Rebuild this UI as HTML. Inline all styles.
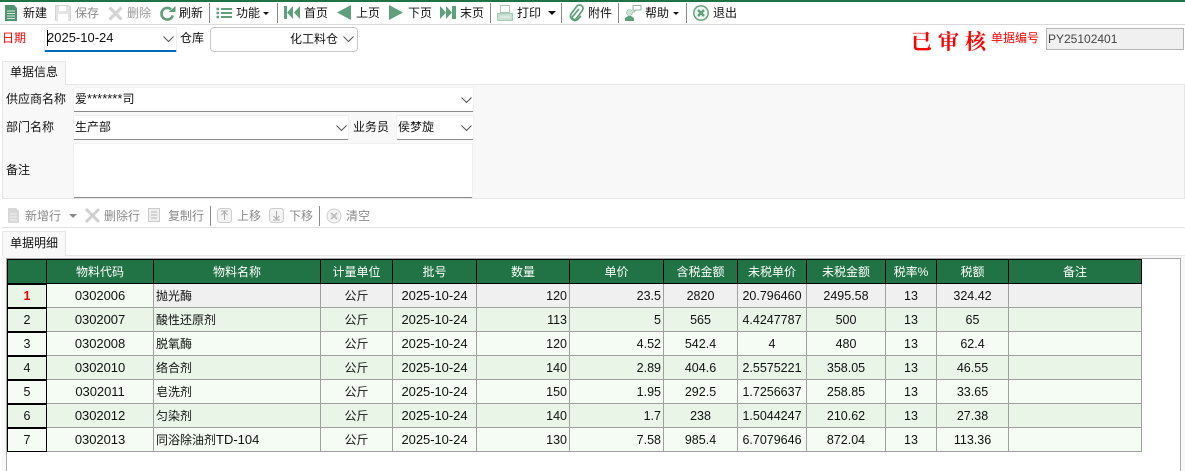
<!DOCTYPE html>
<html><head><meta charset="utf-8">
<style>
*{box-sizing:border-box}
html,body{margin:0;padding:0;width:1185px;height:471px;overflow:hidden;background:#fff;font:12px "Liberation Sans","Noto Sans CJK SC",sans-serif;color:#111}
.a{position:absolute;white-space:nowrap}
.t{position:absolute;white-space:nowrap;line-height:16px;height:16px}
.g{color:#8a8a8a}
.sep{position:absolute;width:1px;background:#8a8a8a}
svg{position:absolute;overflow:visible}
.inp{position:absolute;background:#fff;border-radius:2px;border:1px solid #f0f0f0;border-bottom:1px solid #8a8a8a}
.n{font-size:13px}
table{position:absolute;left:7px;top:259px;border-collapse:collapse;table-layout:fixed;width:1134px}
td,th{height:24px;padding:0;font-weight:normal;border:1px solid #a0a0a0;text-align:center;overflow:hidden;white-space:nowrap;font-size:12.500px}
th{background:#217346;color:#fff;border:1px solid #000;height:24px;font-size:12px}
td.h{background:#e8f5e7;border:2px solid #000;border-width:2px 1px 1px 1px;font-size:12.500px}
td.l{text-align:left;padding-left:2px;font-size:12px}
td.l span{font-size:13px}
td.r{text-align:right;padding-right:2px}
td.d{font-size:13px;letter-spacing:-.05px}
td.u{font-size:12px}
tr.s td{background:#f0f0f0}
tr.s td.h{background:#e8f5e7;color:#e00;font-weight:bold}
tr.s td.c{background:#f4fbf3}
tr.o td{background:#e8f5e7}
tr.e td{background:#f4fcf3}
</style></head><body>
<div class="a" style="left:0;top:0;width:1185px;height:2px;background:#217346"></div>
<div class="a" style="left:0;top:24px;width:1185px;height:1px;background:#d9d9d9"></div>

<!-- main toolbar icons -->
<svg style="left:5px;top:5px" width="13" height="16"><path d="M0 0h9l3 3v13H0z" fill="#4f9470"/><path d="M2 6h8M2 8.500h8M2 11h8M2 13.500h8" stroke="#d5e7dc" stroke-width="1"/></svg>
<div class="t" style="left:23px;top:5px">新建</div>
<svg style="left:55px;top:5px" width="16" height="16"><path d="M0.500 0.500h13l2 2v13H0.500z" fill="#e4e4e4" stroke="#d4d4d4"/><rect x="4" y="1" width="7" height="5" fill="#fff"/><rect x="3" y="9" width="10" height="7" fill="#fff"/></svg>
<div class="t g" style="left:75px;top:5px">保存</div>
<svg style="left:108px;top:6px" width="15" height="15"><path d="M1.500 1.500l12 12M13.500 1.500l-12 12" stroke="#d4d4d4" stroke-width="3.200"/></svg>
<div class="t" style="left:127px;top:5px;color:#9a9a9a">删除</div>
<svg style="left:159px;top:5px" width="17" height="17"><path d="M13.800 10.500A5.800 5.800 0 1 1 12 4.300" fill="none" stroke="#5f9f7c" stroke-width="2.600"/><path d="M9.500 7h7V1z" fill="#5f9f7c"/></svg>
<div class="t" style="left:179px;top:5px">刷新</div>
<div class="sep" style="left:209px;top:3px;height:20px"></div>
<svg style="left:216px;top:7px" width="16" height="12"><path d="M5 2h11M5 6h11M5 10h11" stroke="#5f9f7c" stroke-width="2"/><path d="M0.500 2h2.500M0.500 6h2.500M0.500 10h2.500" stroke="#5f9f7c" stroke-width="2.400"/></svg>
<div class="t" style="left:236px;top:5px">功能</div>
<svg style="left:263px;top:12px" width="6" height="3"><path d="M0 0h6L3 3z" fill="#111"/></svg>
<div class="sep" style="left:277px;top:3px;height:20px"></div>
<svg style="left:284px;top:6px" width="16" height="14"><rect x="0" y="0" width="3" height="13" fill="#5f9f7c"/><path d="M9 0v13L3 6.500zM16 0v13L10 6.500z" fill="#5f9f7c"/></svg>
<div class="t" style="left:304px;top:5px">首页</div>
<svg style="left:337px;top:5px" width="15" height="16"><path d="M14 0v15L0 7.500z" fill="#5f9f7c"/></svg>
<div class="t" style="left:356px;top:5px">上页</div>
<svg style="left:389px;top:5px" width="15" height="16"><path d="M0 0v15l14-7.500z" fill="#5f9f7c"/></svg>
<div class="t" style="left:408px;top:5px">下页</div>
<svg style="left:440px;top:6px" width="16" height="14"><path d="M0 0v13l6-6.500zM6 0v13l6-6.500z" fill="#5f9f7c"/><rect x="12" y="0" width="4" height="13" fill="#5f9f7c"/></svg>
<div class="t" style="left:460px;top:5px">末页</div>
<div class="sep" style="left:490px;top:3px;height:20px"></div>
<svg style="left:497px;top:5px" width="16" height="16"><path d="M3.500 0.500h9v7h-9z" fill="#fff" stroke="#a7c9b5"/><path d="M0.500 8.500h15v7h-15z" fill="#c9dfd1" stroke="#a7c9b5"/><path d="M3 12h10" stroke="#eef5f0"/></svg>
<div class="t" style="left:517px;top:5px">打印</div>
<svg style="left:548px;top:11px" width="8" height="4"><path d="M0 0h8L4 4z" fill="#111"/></svg>
<div class="sep" style="left:561px;top:3px;height:20px"></div>
<svg style="left:569px;top:5px" width="15" height="17"><path d="M10 4l-6 7a2 2 0 0 0 3 3l6-8a3.500 3.500 0 0 0-5-5L2 9a4.500 4.500 0 0 0 6 6l4-4" fill="none" stroke="#5f9f7c" stroke-width="1.700"/></svg>
<div class="t" style="left:588px;top:5px">附件</div>
<div class="sep" style="left:618px;top:3px;height:20px"></div>
<svg style="left:625px;top:5px" width="17" height="17"><path d="M0 16v-3l3-2h3l3 2v3z" fill="#5f9f7c"/><circle cx="4.500" cy="7.500" r="3" fill="#cfe2d6" stroke="#8fb8a1" stroke-width=".6"/><path d="M8 0.500h8v4.500h-5l-2 2V5H8z" fill="#fff" stroke="#8fb8a1"/></svg>
<div class="t" style="left:645px;top:5px">帮助</div>
<svg style="left:673px;top:12px" width="6" height="3"><path d="M0 0h6L3 3z" fill="#111"/></svg>
<div class="sep" style="left:686px;top:3px;height:20px"></div>
<svg style="left:693px;top:5px" width="17" height="17"><circle cx="8" cy="8" r="7.200" fill="#eef5f0" stroke="#5f9f7c" stroke-width="1.400"/><path d="M5 5l6 6M11 5l-6 6" stroke="#5f9f7c" stroke-width="2.400"/></svg>
<div class="t" style="left:713px;top:5px">退出</div>

<!-- header row -->
<div class="t" style="left:2px;top:30px;color:#f00">日期</div>
<div class="a" style="left:44px;top:27px;width:133px;height:25px;background:#fff;border:1px solid #eee;border-bottom:2px solid #0067c0;border-radius:2px"></div>
<div class="t n" style="left:47px;top:30px">2025-10-24</div>
<div class="a" style="left:47px;top:30px;width:1px;height:16px;background:#000"></div>
<svg style="left:163px;top:36px" width="11" height="6"><path d="M0.500 0.500l5 5 5-5" fill="none" stroke="#555"/></svg>
<div class="t" style="left:180px;top:30px">仓库</div>
<div class="a" style="left:210px;top:27px;width:148px;height:25px;background:#fff;border:1px solid #c8c8c8;border-radius:4px"></div>
<div class="t" style="left:290px;top:31px">化工料仓</div>
<svg style="left:343px;top:36px" width="11" height="6"><path d="M0.500 0.500l5 5 5-5" fill="none" stroke="#555"/></svg>

<div class="t" style="left:911px;top:28px;height:26px;color:#f00;font:bold 21px/26px 'Noto Serif CJK SC',serif;letter-spacing:6px">已审核</div>
<div class="t" style="left:991px;top:30px;color:#f00">单据编号</div>
<div class="a" style="left:1046px;top:28px;width:138px;height:22px;background:#f0f0f0;border:1px solid #b4b4b4"></div>
<div class="t" style="left:1048px;top:31px;color:#444">PY25102401</div>

<!-- tab 1 -->
<div class="a" style="left:2px;top:84px;width:1183px;height:115px;background:#f8f8f8;border:1px solid #e6e6e6"></div>
<div class="a" style="left:2px;top:61px;width:64px;height:24px;background:#f8f8f8;border:1px solid #e6e6e6;border-bottom:none"></div>
<div class="t" style="left:10px;top:64px">单据信息</div>
<div class="t" style="left:6px;top:91px">供应商名称</div>
<div class="inp" style="left:73px;top:87px;width:401px;height:25px"></div>
<div class="t" style="left:75px;top:91px">爱<span class="n">*******</span>司</div>
<svg style="left:461px;top:97px" width="11" height="6"><path d="M0.500 0.500l5 5 5-5" fill="none" stroke="#555"/></svg>
<div class="t" style="left:6px;top:119px">部门名称</div>
<div class="inp" style="left:73px;top:115px;width:276px;height:25px"></div>
<div class="t" style="left:75px;top:119px">生产部</div>
<svg style="left:336px;top:125px" width="11" height="6"><path d="M0.500 0.500l5 5 5-5" fill="none" stroke="#555"/></svg>
<div class="t" style="left:353px;top:119px">业务员</div>
<div class="inp" style="left:396px;top:115px;width:78px;height:25px"></div>
<div class="t" style="left:398px;top:119px">侯梦旋</div>
<svg style="left:461px;top:125px" width="11" height="6"><path d="M0.500 0.500l5 5 5-5" fill="none" stroke="#555"/></svg>
<div class="t" style="left:6px;top:162px">备注</div>
<div class="inp" style="left:73px;top:143px;width:400px;height:55px"></div>

<!-- detail toolbar -->
<svg style="left:8px;top:208px" width="13" height="15"><path d="M0 0h8l3 3v12H0z" fill="#d8d8d8"/><path d="M2 6h7M2 9h7M2 12h7" stroke="#f2f2f2"/></svg>
<div class="t g" style="left:25px;top:208px">新增行</div>
<svg style="left:69px;top:214px" width="8" height="4"><path d="M0 0h8L4 4z" fill="#8a8a8a"/></svg>
<svg style="left:85px;top:208px" width="15" height="15"><path d="M1 1l13 13M14 1L1 14" stroke="#d0d0d0" stroke-width="3"/></svg>
<div class="t g" style="left:104px;top:208px">删除行</div>
<svg style="left:148px;top:208px" width="15" height="15"><path d="M0.500 0.500h11v13h-11z" fill="#eee" stroke="#ccc"/><path d="M3 4h6M3 7h6M3 10h6" stroke="#bbb"/></svg>
<div class="t g" style="left:168px;top:208px">复制行</div>
<div class="sep" style="left:210px;top:206px;height:20px"></div>
<svg style="left:217px;top:208px" width="16" height="16"><rect x="0.500" y="0.500" width="14" height="14" rx="3" fill="#f4f4f4" stroke="#ccc"/><path d="M7.500 12V4M4.500 7l3-3 3 3M4 3h7" fill="none" stroke="#aaa"/></svg>
<div class="t g" style="left:237px;top:208px">上移</div>
<svg style="left:269px;top:208px" width="16" height="16"><rect x="0.500" y="0.500" width="14" height="14" rx="3" fill="#f4f4f4" stroke="#ccc"/><path d="M7.500 3v8M4.500 8l3 3 3-3M4 12h7" fill="none" stroke="#aaa"/></svg>
<div class="t g" style="left:289px;top:208px">下移</div>
<div class="sep" style="left:319px;top:206px;height:20px"></div>
<svg style="left:326px;top:208px" width="16" height="16"><circle cx="8" cy="8" r="7" fill="#f4f4f4" stroke="#ccc"/><path d="M5 5l6 6M11 5l-6 6" stroke="#bbb" stroke-width="1.800"/></svg>
<div class="t g" style="left:346px;top:208px">清空</div>
<div class="a" style="left:2px;top:227px;width:1183px;height:1px;background:#e0e0e0"></div>

<!-- tab 2 -->
<div class="a" style="left:2px;top:255px;width:1183px;height:216px;background:#f8f8f8;border-top:1px solid #e6e6e6"></div>
<div class="a" style="left:2px;top:231px;width:64px;height:25px;background:#f8f8f8;border:1px solid #e6e6e6;border-bottom:none"></div>
<div class="t" style="left:10px;top:235px">单据明细</div>

<div class="a" style="left:6px;top:258px;width:1175px;height:213px;background:#fff;border:1px solid #a8a8a8;border-bottom:none"></div>

<table>
<colgroup><col style="width:39px"><col style="width:107px"><col style="width:167px"><col style="width:72px"><col style="width:84px"><col style="width:93px"><col style="width:94px"><col style="width:74px"><col style="width:69px"><col style="width:79px"><col style="width:51px"><col style="width:72px"><col style="width:133px"></colgroup>
<tr><th></th><th>物料代码</th><th>物料名称</th><th>计量单位</th><th>批号</th><th>数量</th><th>单价</th><th>含税金额</th><th>未税单价</th><th>未税金额</th><th>税率%</th><th>税额</th><th>备注</th></tr>
<tr class="s"><td class="h">1</td><td class="c d">0302006</td><td class="l">抛光酶</td><td class="u">公斤</td><td class="d">2025-10-24</td><td class="r">120</td><td class="r">23.5</td><td>2820</td><td>20.796460</td><td>2495.58</td><td>13</td><td>324.42</td><td></td></tr>
<tr class="o"><td class="h">2</td><td class="d">0302007</td><td class="l">酸性还原剂</td><td class="u">公斤</td><td class="d">2025-10-24</td><td class="r">113</td><td class="r">5</td><td>565</td><td>4.4247787</td><td>500</td><td>13</td><td>65</td><td></td></tr>
<tr class="e"><td class="h">3</td><td class="d">0302008</td><td class="l">脱氧酶</td><td class="u">公斤</td><td class="d">2025-10-24</td><td class="r">120</td><td class="r">4.52</td><td>542.4</td><td>4</td><td>480</td><td>13</td><td>62.4</td><td></td></tr>
<tr class="o"><td class="h">4</td><td class="d">0302010</td><td class="l">络合剂</td><td class="u">公斤</td><td class="d">2025-10-24</td><td class="r">140</td><td class="r">2.89</td><td>404.6</td><td>2.5575221</td><td>358.05</td><td>13</td><td>46.55</td><td></td></tr>
<tr class="e"><td class="h">5</td><td class="d">0302011</td><td class="l">皂洗剂</td><td class="u">公斤</td><td class="d">2025-10-24</td><td class="r">150</td><td class="r">1.95</td><td>292.5</td><td>1.7256637</td><td>258.85</td><td>13</td><td>33.65</td><td></td></tr>
<tr class="o"><td class="h">6</td><td class="d">0302012</td><td class="l">匀染剂</td><td class="u">公斤</td><td class="d">2025-10-24</td><td class="r">140</td><td class="r">1.7</td><td>238</td><td>1.5044247</td><td>210.62</td><td>13</td><td>27.38</td><td></td></tr>
<tr class="e"><td class="h">7</td><td class="d">0302013</td><td class="l">同浴除油剂<span>TD-104</span></td><td class="u">公斤</td><td class="d">2025-10-24</td><td class="r">130</td><td class="r">7.58</td><td>985.4</td><td>6.7079646</td><td>872.04</td><td>13</td><td>113.36</td><td></td></tr>
</table>
</body></html>
